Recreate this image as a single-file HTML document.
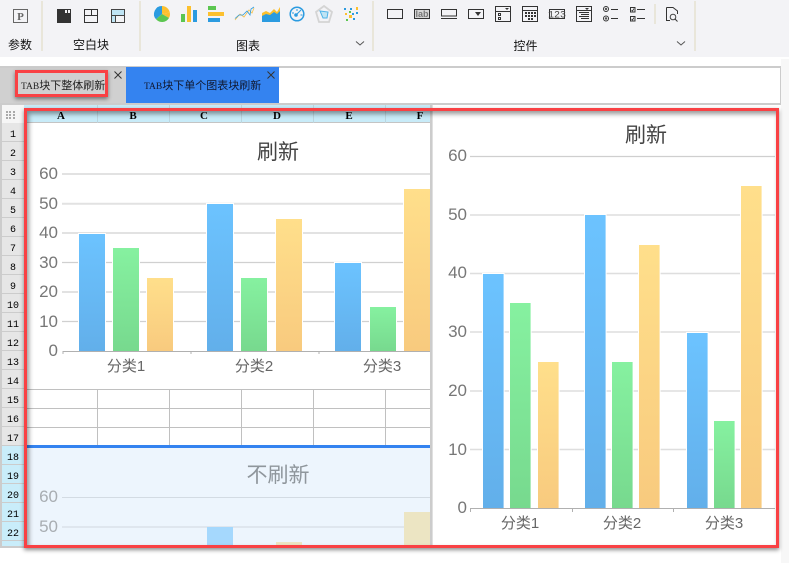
<!DOCTYPE html>
<html><head><meta charset="utf-8">
<style>
html,body{margin:0;padding:0;background:#fff;width:789px;height:563px;overflow:hidden}
svg{position:absolute;left:0;top:0;display:block}
text{font-family:"Liberation Sans","WenQuanYi Zen Hei","Noto Sans CJK SC",sans-serif}
.m{font-family:"Liberation Mono",monospace;font-size:10px;fill:#000;text-anchor:middle}
.h{font-family:"Liberation Serif",serif;font-weight:bold;font-size:11px}
.lb{font-size:12px;fill:#111;text-anchor:middle}
.ax{font-size:17px;fill:#777;text-anchor:end}
.axp{font-size:17px;fill:#a8adb2;text-anchor:end}
.cat{font-size:15px;fill:#666;text-anchor:middle}
.t{font-size:21px;fill:#444;text-anchor:middle}
.tb{font-size:11px;fill:#222}
.tb tspan.l{font-family:"Liberation Serif",serif;font-size:9.5px}
.red{position:absolute;border:solid #f94144;box-sizing:border-box}
</style></head><body>
<svg width="789" height="563" viewBox="0 0 789 563">
<defs>
<linearGradient id="b" x1="0" y1="0" x2="0" y2="1"><stop offset="0" stop-color="#6cc3ff"/><stop offset="1" stop-color="#62afea"/></linearGradient>
<linearGradient id="g" x1="0" y1="0" x2="0" y2="1"><stop offset="0" stop-color="#86f1a0"/><stop offset="1" stop-color="#77d98e"/></linearGradient>
<linearGradient id="o" x1="0" y1="0" x2="0" y2="1"><stop offset="0" stop-color="#ffdf8b"/><stop offset="1" stop-color="#f8ca7e"/></linearGradient>
<clipPath id="cl"><rect x="27" y="123" width="403" height="322"/></clipPath>
<clipPath id="cl2"><rect x="27" y="448" width="403" height="98"/></clipPath>
</defs>

<!-- toolbar -->
<rect x="0" y="0" width="789" height="57" fill="#f3f3f6"/>
<g fill="#e9e6da">
<rect x="41" y="1" width="2" height="50"/><rect x="139" y="1" width="2" height="50"/><rect x="372" y="1" width="2" height="50"/><rect x="694" y="1" width="2" height="50"/><rect x="654" y="4" width="2" height="20"/>
</g>
<!-- param -->
<rect x="13.5" y="9.5" width="14" height="13" fill="none" stroke="#666"/>
<text x="20.5" y="20" font-size="11" font-weight="bold" text-anchor="middle" fill="#666" style="font-family:'Liberation Serif',serif">P</text>
<!-- blocks -->
<rect x="57" y="9" width="14" height="14" fill="#333"/><rect x="65" y="10" width="2" height="3" fill="#f3f3f6"/><rect x="68" y="10" width="2" height="3" fill="#f3f3f6"/>
<g fill="none" stroke="#333">
<rect x="84.5" y="9.5" width="13" height="13"/><path d="M85 15.5H97M91.5 10V15"/>
</g>
<rect x="112" y="10" width="12" height="5" fill="#bfe4f4"/><rect x="112" y="16" width="3" height="6" fill="#bfe4f4"/>
<g fill="none" stroke="#444"><rect x="111.5" y="9.5" width="13" height="13"/><path d="M112 15.5H124M115.5 16V22"/></g>
<!-- pie -->
<path d="M162 14L162 6A8 8 0 0 0 156 19.3Z" fill="#2b9be0"/>
<path d="M162 14V6A8 8 0 0 1 169.8 12.5Z" fill="#fcc02e"/>
<path d="M162 14L169.8 12.5A8 8 0 0 1 169 18Z" fill="#fcc02e"/>
<path d="M162 14L169 18A8 8 0 0 1 156 19.3Z" fill="#5cc651"/>
<!-- bar -->
<rect x="181" y="14" width="4" height="8" fill="#5cc651"/><rect x="187" y="6" width="4" height="16" fill="#fcc02e"/><rect x="193" y="10" width="4" height="12" fill="#2b9be0"/>
<!-- hbar -->
<rect x="208" y="6" width="8" height="4" fill="#5cc651"/><rect x="208" y="12" width="16" height="4" fill="#fcc02e"/><rect x="208" y="18" width="12" height="4" fill="#2b9be0"/>
<!-- line -->
<path d="M235 20L240 14L244 17L249 10L252 13L254 8" fill="none" stroke="#f6c14a" stroke-width=".8"/>
<path d="M235 18.5L239 15L243 15L247 11L250 15L251 9L254 7" fill="none" stroke="#2b9be0" stroke-width=".8"/>
<!-- area -->
<path d="M262 22V13L266 11L270 13L274 9L277 12L280 7V22Z" fill="#fcc02e"/>
<path d="M262 22V16L266 14L270 15L274 12L277 14L278 13L280 11V22Z" fill="#2b9be0"/>
<!-- gauge -->
<circle cx="297" cy="14" r="6.8" fill="none" stroke="#2b9be0" stroke-width="1.5"/>
<circle cx="296" cy="15" r="1.8" fill="#2b9be0"/><path d="M297 14L301 10M292 13h2M297 9v2M300.5 15h2" stroke="#2b9be0" fill="none"/>
<!-- radar -->
<path d="M324 6L332 12L329 22H319L316 12Z" fill="none" stroke="#d4d4d4" stroke-width="1.8"/>
<path d="M320 11L328 12L327 18L323 18Z" fill="#bfe4f4" stroke="#4fb3e8"/>
<!-- scatter -->
<g>
<rect x="344" y="8" width="2" height="2" fill="#2b9be0"/><rect x="356" y="7" width="2" height="3" fill="#fcc02e"/><rect x="345" y="13" width="2" height="2" fill="#fcc02e"/><rect x="350" y="8" width="2" height="2" fill="#2b9be0"/><rect x="352" y="13" width="2" height="2" fill="#2b9be0"/><rect x="349" y="15" width="3" height="3" fill="#fcc02e"/><rect x="353" y="18" width="2" height="2" fill="#2b9be0"/><rect x="346" y="19" width="2" height="2" fill="#5cc651"/><rect x="356" y="12" width="2" height="2" fill="#2b9be0"/><rect x="349" y="11" width="2" height="2" fill="#5cc651"/>
</g>
<!-- controls -->
<g fill="none" stroke="#333">
<rect x="387.5" y="9.5" width="15" height="9"/>
<rect x="414.5" y="9.5" width="15" height="9" fill="#d6d6d6"/>
<rect x="441.5" y="9.5" width="15" height="6.5"/><path d="M441 18.5H457"/>
<rect x="468.5" y="9.5" width="15" height="9"/>
<rect x="495.5" y="6.5" width="15" height="15"/><path d="M496 11.5H510"/><rect x="498.5" y="13.5" width="2" height="2"/><rect x="498.5" y="17.5" width="2" height="2"/>
<rect x="522.5" y="6.5" width="15" height="15"/><path d="M523 10.5H537"/>
<rect x="549.5" y="9.5" width="15" height="9"/>
<rect x="576.5" y="6.5" width="15" height="15"/><path d="M577 10.5H591M579 12.5H589M581 14.5H589M579 16.5H589M581 18.5H589"/>
<circle cx="606" cy="9" r="2.5"/><circle cx="606" cy="18.5" r="2.5"/><path d="M611 9.5H618M611 18.5H618"/>
<rect x="630.5" y="7.5" width="4.5" height="4.5"/><rect x="630.5" y="16.5" width="4.5" height="4.5"/><path d="M637 9.5H645M637 18.5H645"/>
<path d="M666.5 7.5H673L677.5 11V14M666.5 7.5V20.5H670"/><circle cx="673" cy="17" r="2.8" stroke="#444"/><path d="M675 19L677.5 21.5"/>
</g>
<text x="422" y="17" font-size="9" text-anchor="middle" fill="#777" font-weight="bold">lab</text>
<path d="M475 12H481L478 16Z" fill="#333"/>
<path d="M505 8H509L507 10Z" fill="#333"/><path d="M585 8H589L587 10Z" fill="#333" />
<g fill="#333"><rect x="525" y="12" width="2" height="2"/><rect x="528" y="12" width="2" height="2"/><rect x="531" y="12" width="2" height="2"/><rect x="534" y="12" width="2" height="2"/><rect x="525" y="15" width="2" height="2"/><rect x="528" y="15" width="2" height="2"/><rect x="531" y="15" width="2" height="2"/><rect x="534" y="15" width="2" height="2"/><rect x="528" y="18" width="2" height="2"/><rect x="531" y="18" width="2" height="2"/></g>
<circle cx="606" cy="9" r="1.2" fill="#555"/><circle cx="606" cy="18.5" r="1.2" fill="#555"/>
<text x="557" y="17.5" font-size="10" text-anchor="middle" fill="#444" style="font-family:'Liberation Mono',monospace">123</text>
<path d="M631.5 10L632.5 11L634 8.5M631.5 19L632.5 20L634 17.5" fill="none" stroke="#333" stroke-width=".8"/>
<text class="lb" x="20" y="49">参数</text>
<text class="lb" x="91" y="49">空白块</text>
<text class="lb" x="248" y="50">图表</text>
<text class="lb" x="525.5" y="50">控件</text>
<path d="M356 41.5L360 45L364 41.5M677 41.5L681 45L685 41.5" fill="none" stroke="#555"/>

<!-- tab bar -->
<rect x="0" y="66" width="781" height="2" fill="#ccc"/>
<rect x="0" y="68" width="126" height="35" fill="#d0d0d0"/>
<rect x="126" y="67" width="153" height="36" fill="#3483f0"/>
<rect x="0" y="103" width="781" height="2" fill="#ccc"/>
<rect x="780" y="66" width="1" height="39" fill="#ccc"/>
<text class="tb" x="21" y="89"><tspan class="l">TAB</tspan>块下整体刷新</text>
<text class="tb" x="144" y="89" style="fill:#101830"><tspan class="l">TAB</tspan>块下单个图表块刷新</text>
<path d="M114.5 71.5L121.5 78.5M121.5 71.5L114.5 78.5M267.5 71.5L274.5 78.5M274.5 71.5L267.5 78.5" stroke="#333" fill="none"/>

<!-- scrollbar -->
<rect x="781" y="59" width="8" height="504" fill="#f7f7f7"/>

<!-- editor left -->
<rect x="0" y="105" width="2" height="443" fill="#ccc"/>
<rect x="0" y="546" width="24" height="2" fill="#ccc"/>
<rect x="2" y="105" width="22" height="18" fill="#f6f6f6"/>
<g fill="#aaa"><rect x="6" y="111" width="2" height="2"/><rect x="9" y="111" width="2" height="2"/><rect x="13" y="111" width="2" height="2"/><rect x="6" y="114" width="2" height="2"/><rect x="9" y="114" width="2" height="2"/><rect x="13" y="114" width="2" height="2"/><rect x="6" y="117" width="2" height="2"/><rect x="9" y="117" width="2" height="2"/><rect x="13" y="117" width="2" height="2"/></g>
<rect x="2" y="123" width="22" height="323" fill="#e6e6e6"/>
<rect x="2" y="446" width="22" height="100" fill="#c9edfa"/>
<g fill="#ccc">
<rect x="2" y="141" width="22" height="1"/><rect x="2" y="160" width="22" height="1"/><rect x="2" y="179" width="22" height="1"/><rect x="2" y="198" width="22" height="1"/><rect x="2" y="217" width="22" height="1"/><rect x="2" y="236" width="22" height="1"/><rect x="2" y="255" width="22" height="1"/><rect x="2" y="274" width="22" height="1"/><rect x="2" y="293" width="22" height="1"/><rect x="2" y="312" width="22" height="1"/><rect x="2" y="331" width="22" height="1"/><rect x="2" y="350" width="22" height="1"/><rect x="2" y="369" width="22" height="1"/><rect x="2" y="388" width="22" height="1"/><rect x="2" y="407" width="22" height="1"/><rect x="2" y="426" width="22" height="1"/><rect x="2" y="445" width="22" height="1"/><rect x="2" y="464" width="22" height="1"/><rect x="2" y="483" width="22" height="1"/><rect x="2" y="502" width="22" height="1"/><rect x="2" y="521" width="22" height="1"/><rect x="2" y="540" width="22" height="1"/>
</g>
<g>
<text class="m" x="13" y="137">1</text><text class="m" x="13" y="156">2</text><text class="m" x="13" y="175">3</text><text class="m" x="13" y="194">4</text><text class="m" x="13" y="213">5</text><text class="m" x="13" y="232">6</text><text class="m" x="13" y="251">7</text><text class="m" x="13" y="270">8</text><text class="m" x="13" y="289">9</text><text class="m" x="13" y="308">10</text><text class="m" x="13" y="327">11</text><text class="m" x="13" y="346">12</text><text class="m" x="13" y="365">13</text><text class="m" x="13" y="384">14</text><text class="m" x="13" y="403">15</text><text class="m" x="13" y="422">16</text><text class="m" x="13" y="441">17</text><text class="m" x="13" y="460">18</text><text class="m" x="13" y="479">19</text><text class="m" x="13" y="498">20</text><text class="m" x="13" y="517">21</text><text class="m" x="13" y="536">22</text>
</g>

<!-- column header -->
<rect x="24" y="105" width="406" height="18" fill="#c8ebf8"/>
<rect x="24" y="122" width="406" height="1.5" fill="#c4c4c4"/>
<g fill="#bcd5de"><rect x="97" y="105" width="1" height="18"/><rect x="169" y="105" width="1" height="18"/><rect x="241" y="105" width="1" height="18"/><rect x="313" y="105" width="1" height="18"/><rect x="385" y="105" width="1" height="18"/></g>
<text class="m h" x="61" y="119">A</text><text class="m h" x="133" y="119">B</text><text class="m h" x="204" y="119">C</text><text class="m h" x="277" y="119">D</text><text class="m h" x="349" y="119">E</text><text class="m h" x="420" y="119">F</text>

<!-- left chart -->
<g clip-path="url(#cl)">
<rect x="24" y="123" width="407" height="322" fill="#fff"/>
<text class="t" x="278" y="159">刷新</text>
<g stroke="#d0d0d0" stroke-width="1.2">
<path d="M62 174H431"/><path d="M62 203.7H431" stroke="#e2e2e2" stroke-width="2"/><path d="M62 233H431"/><path d="M62 262.5H431"/><path d="M62 292H431"/><path d="M62 321.5H431"/>
</g>
<g stroke="#fff" stroke-width="1">
<rect x="78.5" y="233.5" width="27" height="118" fill="url(#b)"/><rect x="112.5" y="247.5" width="27" height="104" fill="url(#g)"/><rect x="146.5" y="277.5" width="27" height="74" fill="url(#o)"/>
<rect x="206.5" y="203.5" width="27" height="148" fill="url(#b)"/><rect x="240.5" y="277.5" width="27" height="74" fill="url(#g)"/><rect x="275.5" y="218.5" width="27" height="133" fill="url(#o)"/>
<rect x="334.5" y="262.5" width="27" height="89" fill="url(#b)"/><rect x="369.5" y="306.5" width="27" height="45" fill="url(#g)"/><rect x="403.5" y="188.5" width="28" height="163" fill="url(#o)"/>
</g>
<path d="M63 351.5H431M63 351V354M191 351V354M319 351V354" stroke="#b0b0b0" fill="none"/>
<text class="ax" x="58" y="179">60</text><text class="ax" x="58" y="209">50</text><text class="ax" x="58" y="238">40</text><text class="ax" x="58" y="268">30</text><text class="ax" x="58" y="297">20</text><text class="ax" x="58" y="327">10</text><text class="ax" x="58" y="356">0</text>
<text class="cat" x="126" y="371">分类1</text><text class="cat" x="254" y="371">分类2</text><text class="cat" x="382" y="371">分类3</text>
<g stroke="#c0c0c0" fill="none"><path d="M27 389.5H431M27 408.5H431M27 427.5H431"/><path d="M97.5 389V445M169.5 389V445M241.5 389V445M313.5 389V445M385.5 389V445"/></g>
</g>
<rect x="27" y="445" width="403" height="3" fill="#3483f0"/>
<!-- lower -->
<g clip-path="url(#cl2)">
<rect x="27" y="448" width="404" height="98" fill="#edf5fd"/>
<text class="t" x="278" y="482" style="fill:#8f969c">不刷新</text>
<path d="M62 497.5H431" stroke="#d3dbe3"/><path d="M62 527H431" stroke="#dfe6ee" stroke-width="2"/>
<rect x="207" y="527" width="26" height="30" fill="#a5d8fd"/><rect x="276" y="542" width="26" height="10" fill="#ece5c3"/><rect x="404" y="512" width="27" height="40" fill="#ece5c3"/>
<text class="axp" x="58" y="502">60</text><text class="axp" x="58" y="532">50</text>
</g>
<!-- divider -->
<rect x="430" y="105" width="2.6" height="443" fill="#ccc"/>

<!-- right chart -->
<rect x="433" y="110" width="343" height="435" fill="#fff"/>
<text class="t" x="646" y="142">刷新</text>
<g stroke="#cfcfcf" stroke-width="1.2">
<path d="M470 156.5H775"/><path d="M470 215H775" stroke="#dedede" stroke-width="1.6"/><path d="M470 273.5H775" stroke="#dedede" stroke-width="1.6"/><path d="M470 332H775" stroke="#dedede" stroke-width="1.6"/><path d="M470 391H775" stroke="#dedede" stroke-width="1.6"/><path d="M470 449.5H775" stroke="#dedede" stroke-width="1.6"/>
</g>
<g stroke="#fff" stroke-width="1">
<rect x="482.5" y="273.5" width="21.6" height="235" fill="url(#b)"/><rect x="509.5" y="302.5" width="21.6" height="206" fill="url(#g)"/><rect x="537.5" y="361.5" width="21.6" height="147" fill="url(#o)"/>
<rect x="584.5" y="214.5" width="21.6" height="294" fill="url(#b)"/><rect x="611.5" y="361.5" width="21.6" height="147" fill="url(#g)"/><rect x="638.5" y="244.5" width="21.6" height="264" fill="url(#o)"/>
<rect x="686.5" y="332.5" width="21.6" height="176" fill="url(#b)"/><rect x="713.5" y="420.5" width="21.6" height="88" fill="url(#g)"/><rect x="740.5" y="185.5" width="21.6" height="323" fill="url(#o)"/>
</g>
<path d="M470 508.5H775M470.5 508V512M572.5 508V512M673.5 508V512" stroke="#b0b0b0" fill="none"/>
<text class="ax" x="467" y="161">60</text><text class="ax" x="467" y="220">50</text><text class="ax" x="467" y="278">40</text><text class="ax" x="467" y="337">30</text><text class="ax" x="467" y="396">20</text><text class="ax" x="467" y="455">10</text><text class="ax" x="467" y="513">0</text>
<text class="cat" x="520" y="528">分类1</text><text class="cat" x="622" y="528">分类2</text><text class="cat" x="724" y="528">分类3</text>
</svg>
<div class="red" style="left:24px;top:108px;width:755px;height:440px;border-width:3px;box-shadow:0 2px 4px rgba(0,0,0,.45),inset 2px 3px 5px rgba(0,0,0,.4)"></div>
<div class="red" style="left:15px;top:70px;width:93px;height:27px;border-width:3px;box-shadow:0 2px 4px rgba(0,0,0,.45)"></div>
</body></html>
